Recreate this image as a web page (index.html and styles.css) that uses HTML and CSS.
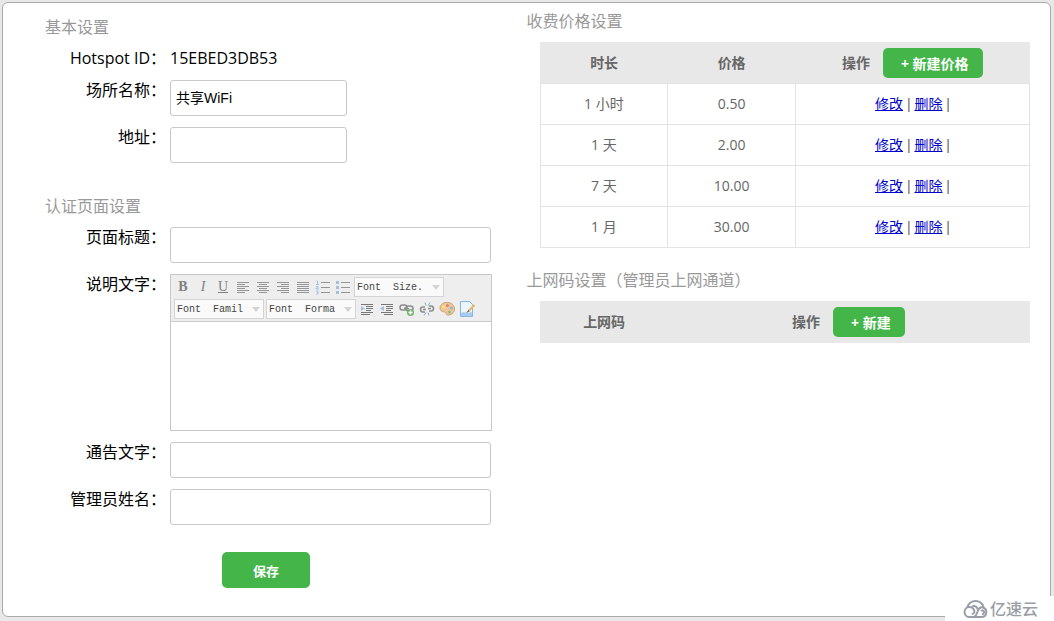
FILE: index.html
```html
<!DOCTYPE html>
<html lang="zh-CN">
<head>
<meta charset="utf-8">
<meta name="viewport" content="width=device-width, initial-scale=1">
<title>热点设置</title>
<link rel="stylesheet" href="styles.css">
</head>
<body>
<main class="panel">
  <form class="settings">
    <h2 class="title">基本设置</h2>
    <div class="fields">
      <span class="label">Hotspot ID：</span>
      <span class="value">15EBED3DB53</span>
      <label class="label" for="place">场所名称：</label>
      <input class="input input-short" id="place" type="text" value="共享WiFi">
      <label class="label" for="address">地址：</label>
      <input class="input input-short" id="address" type="text">
    </div>
    <h2 class="title title-next">认证页面设置</h2>
    <div class="fields">
      <label class="label" for="page-title">页面标题：</label>
      <input class="input" id="page-title" type="text">
      <label class="label" for="description">说明文字：</label>
      <div class="editor">
        <div class="toolbar">
          <div class="tools">
            <button class="tool tool-bold" type="button" aria-label="Bold">B</button>
            <button class="tool tool-italic" type="button" aria-label="Italic">I</button>
            <button class="tool tool-underline" type="button" aria-label="Underline">U</button>
            <button class="tool" type="button" aria-label="Align left"><svg class="icon" viewBox="0 0 16 16"><path class="line" d="M2 3.5h12M2 5.5h8M2 7.5h12M2 9.5h8M2 11.5h12M2 13.5h8"/></svg></button>
            <button class="tool" type="button" aria-label="Align center"><svg class="icon" viewBox="0 0 16 16"><path class="line" d="M2 3.5h12M4 5.5h8M2 7.5h12M4 9.5h8M2 11.5h12M4 13.5h8"/></svg></button>
            <button class="tool" type="button" aria-label="Align right"><svg class="icon" viewBox="0 0 16 16"><path class="line" d="M2 3.5h12M6 5.5h8M2 7.5h12M6 9.5h8M2 11.5h12M6 13.5h8"/></svg></button>
            <button class="tool" type="button" aria-label="Justify"><svg class="icon" viewBox="0 0 16 16"><path class="line" d="M2 3.5h12M2 5.5h12M2 7.5h12M2 9.5h12M2 11.5h12M2 13.5h12"/></svg></button>
            <button class="tool" type="button" aria-label="Numbered list"><svg class="icon" viewBox="0 0 16 16"><path class="line" d="M6 3.5h9M6 8.5h9M6 13.5h9"/><path class="blue" d="M1.5 2h1v3M1 5.500h3M1 7.500h2v1.500h-2v1h3M1 12h2v3h-2M2 13.500h1"/></svg></button>
            <button class="tool" type="button" aria-label="Bulleted list"><svg class="icon" viewBox="0 0 16 16"><path class="line" d="M6 3.5h9M6 8.5h9M6 13.5h9"/><path class="dot" d="M1 2h3v3H1zM1 7h3v3H1zM1 12h3v3H1z"/></svg></button>
            <span class="pick"><select class="pick-box" aria-label="Font size"><option>Font&nbsp; Size.</option></select></span>
          </div>
          <div class="tools">
            <span class="pick"><select class="pick-box" aria-label="Font family"><option>Font&nbsp; Famil</option></select></span>
            <span class="pick"><select class="pick-box" aria-label="Font format"><option>Font&nbsp; Forma</option></select></span>
            <button class="tool" type="button" aria-label="Indent"><svg class="icon" viewBox="0 0 16 16"><path class="line line-dark" d="M2 3.500h12M7 5.500h7M7 7.500h7M7 9.500h5M2 11.500h12M2 13.500h9"/><path class="dot" d="M2 5l4 2.500-4 2.500z"/></svg></button>
            <button class="tool" type="button" aria-label="Outdent"><svg class="icon" viewBox="0 0 16 16"><path class="line line-dark" d="M2 3.500h12M7 5.500h7M7 7.500h7M7 9.500h5M2 11.500h12M5 13.500h9"/><path class="dot" d="M5 5L1 7.500 5 10z"/></svg></button>
            <button class="tool" type="button" aria-label="Add link"><svg class="icon" viewBox="0 0 16 16"><g class="chain"><rect x="1" y="4" width="7" height="5" rx="2.500"/><rect x="7" y="5" width="7" height="5" rx="2.500"/><path d="M5 7l5 1"/></g><circle cx="11.500" cy="11.500" r="3.500" fill="#74b46c"/><path d="M9.500 11.500h4M11.500 9.500v4" stroke="#fff" stroke-width="1.400"/></svg></button>
            <button class="tool" type="button" aria-label="Remove link"><svg class="icon" viewBox="0 0 16 16"><g class="chain"><path d="M6 6H4a2.500 2.500 0 0 0 0 5h2M10 5h2a2.500 2.500 0 0 1 0 5h-2M4 8.500h3M9 7.500h3"/></g><path d="M6 1.500l1 3M11 1.500l-2 3M5 14.500l2-3M10 14.500l-1-3" stroke="#8cacd4" fill="none"/></svg></button>
            <button class="tool" type="button" aria-label="Text color"><svg class="icon" viewBox="0 0 16 16"><path d="M1 7C1 3 5 1 9 1.500c4 .4 6.500 3 6.500 6.500 0 4-4 6.500-7 6-2-.4-1-2.500-2.500-3C4 10.500 1 10.500 1 7z" fill="#edc79c" stroke="#d1a071"/><circle cx="4.500" cy="6" r="1.500" fill="#f7e36d"/><circle cx="8.500" cy="4.500" r="1.500" fill="#dd8373"/><circle cx="12.300" cy="7" r="1.500" fill="#8bb1d9"/><circle cx="10.500" cy="11" r="1.500" fill="#8fc080"/></svg></button>
            <button class="tool" type="button" aria-label="Edit HTML"><svg class="icon" viewBox="0 0 16 16"><path d="M1.500 .5h9l3 3v12h-12z" fill="#eef6fd" stroke="#86b6e4"/><path d="M2 12c3-2 6 1 11-1v4H2z" fill="#a5cbee"/><path d="M15.500 4l-6 6" stroke="#e5b868" stroke-width="2.200"/><path d="M9.500 9L7 12l3.500-1.500z" fill="#666"/></svg></button>
          </div>
        </div>
        <textarea class="editor-text" id="description"></textarea>
      </div>
      <label class="label" for="notice">通告文字：</label>
      <input class="input" id="notice" type="text">
      <label class="label" for="admin">管理员姓名：</label>
      <input class="input" id="admin" type="text">
    </div>
    <button class="button button-save" type="button">保存</button>
  </form>

  <section class="pricing">
    <h2 class="title">收费价格设置</h2>
    <table class="table">
      <colgroup><col class="col-narrow"><col class="col-narrow"><col></colgroup>
      <thead>
        <tr><th>时长</th><th>价格</th><th><span class="action">操作<button class="button button-new" type="button">+ 新建价格</button></span></th></tr>
      </thead>
      <tbody>
        <tr><td>1 小时</td><td>0.50</td><td class="links"><a href="#">修改</a> | <a href="#">删除</a> |</td></tr>
        <tr><td>1 天</td><td>2.00</td><td class="links"><a href="#">修改</a> | <a href="#">删除</a> |</td></tr>
        <tr><td>7 天</td><td>10.00</td><td class="links"><a href="#">修改</a> | <a href="#">删除</a> |</td></tr>
        <tr><td>1 月</td><td>30.00</td><td class="links"><a href="#">修改</a> | <a href="#">删除</a> |</td></tr>
      </tbody>
    </table>
    <h2 class="title title-codes">上网码设置（管理员上网通道）</h2>
    <table class="table">
      <colgroup><col class="col-narrow"><col></colgroup>
      <thead>
        <tr><th>上网码</th><th><span class="action">操作<button class="button button-new" type="button">+ 新建</button></span></th></tr>
      </thead>
    </table>
  </section>
</main>
<div class="brand">
  <svg class="brand-logo" viewBox="0 0 26 20"><path d="M4.500 8C5 4.500 8.500 2 12.500 2s7.500 2.500 8 6M19 18H6.500a5 5 0 1 1 4.800-6.500c.6 2-.8 3.500-2.500 3.500M9 7.500c3-1.200 5.500.3 5.500 3M11 18c2.500-1 3-4 4-6.500 1-2.500 3-3.500 5-3a4.900 4.900 0 0 1-1 9.500M19 15a1.800 1.800 0 1 0-1-3"/></svg>
  <span>亿速云</span>
</div>
</body>
</html>
```
FILE: styles.css
```css
* {
  box-sizing: border-box;
}

body {
  display: flex;
  min-height: 100vh;
  margin: 0;
  padding: 2px 3px 4px 2px;
  background: #e8e8e8;
  color: #000;
  font: 16px/22px "Open Sans", "Noto Sans CJK SC", sans-serif;
}

input,
select,
textarea,
button {
  margin: 0;
  font-family: inherit;
}

.panel {
  display: grid;
  flex: 1;
  grid-template-columns: minmax(490px, 50fr) minmax(400px, 50fr);
  border: 1px solid #aaa;
  border-radius: 6px;
  background: #fff;
}

.settings {
  padding: 13px 0 28px;
}

.pricing {
  padding: 7px 20px 28px 0;
}

.title {
  margin: 0 0 10px;
  color: #999;
  font-size: 16px;
  font-weight: 400;
}

.settings .title {
  padding-left: 42px;
}

.settings .title-next {
  margin-top: 32px;
}

.title-codes {
  margin-top: 21px;
}

.fields {
  display: grid;
  grid-template-columns: 163px minmax(0, 322px);
  gap: 11px 4px;
}

.label,
.value {
  line-height: 21px;
}

.label {
  text-align: right;
}

.input {
  width: 321px;
  max-width: 100%;
  height: 36px;
  padding: 0 5px 2px;
  border: 1px solid #c8c8c8;
  border-radius: 3px;
  background: #fff;
  font-family: "Liberation Sans", "Noto Sans CJK SC", sans-serif;
  font-size: 14px;
}

.input-short {
  width: 177px;
}

.editor {
  border: 1px solid #c8c8c8;
}

.toolbar {
  padding: 1px 2px;
  border-bottom: 1px solid #ccc;
  background: #eee;
}

.tools {
  display: flex;
  align-items: center;
  height: 22px;
}

.tool {
  display: flex;
  align-items: center;
  justify-content: center;
  width: 20px;
  height: 20px;
  padding: 0;
  border: 0;
  background: none;
  color: #808080;
  font-family: "Liberation Serif", serif;
  font-size: 14px;
}

.tool-bold {
  font-weight: 700;
}

.tool-italic {
  font-style: italic;
}

.tool-underline {
  text-decoration: underline;
}

.icon {
  width: 16px;
  height: 16px;
}

.line {
  fill: none;
  stroke: #959595;
}

.line-dark {
  stroke: #777;
}

.blue {
  fill: none;
  stroke: #a3c4ec;
}

.dot {
  fill: #a3c0e2;
}

.chain {
  fill: none;
  stroke: #8c8c8c;
  stroke-width: 1.5;
}

.pick {
  position: relative;
  width: 90px;
  height: 20px;
  margin: 0 1px;
}

.pick::after {
  content: "";
  position: absolute;
  top: 8px;
  right: 4px;
  border: 4px solid transparent;
  border-top: 5px solid #d4d4d4;
  border-bottom: 0;
  pointer-events: none;
}

.pick-box {
  display: block;
  appearance: none;
  width: 100%;
  height: 100%;
  padding: 0 0 0 2px;
  border: 1px solid #d4d4d4;
  border-radius: 0;
  background: #fafafa;
  color: #444;
  font-family: "Liberation Mono", monospace;
  font-size: 10px;
}

.editor-text {
  display: block;
  width: 100%;
  height: 108px;
  padding: 4px;
  border: 0;
  resize: none;
  font-size: 14px;
}

.button {
  border: 0;
  border-radius: 5px;
  background: #44b549;
  color: #fff;
  font-size: 13px;
  font-weight: 700;
}

.button-save {
  display: block;
  width: 88px;
  height: 36px;
  margin: 27px 0 0 219px;
}

.button-new {
  height: 30px;
  padding: 0 14px 0 18px;
  font-size: 14px;
}

.table {
  width: calc(100% - 13px);
  margin-left: 13px;
  border-collapse: collapse;
  table-layout: fixed;
  color: #666;
  font-size: 14px;
  text-align: center;
}

.col-narrow {
  width: 26.1%;
}

.table th {
  height: 41px;
  padding: 0;
  background: #e8e8e8;
}

.table thead {
  border: 1px solid #e8e8e8;
}

.table td {
  height: 41px;
  padding: 0;
  border: 1px solid #e3e3e3;
}

.table .links {
  font-family: "Liberation Sans", "Noto Sans CJK SC", sans-serif;
}

.table a {
  color: #00c;
}

.action {
  display: flex;
  align-items: center;
  justify-content: center;
  gap: 13px;
}

.brand {
  position: absolute;
  right: 0;
  bottom: 0;
  display: flex;
  align-items: center;
  gap: 1px;
  width: 109px;
  height: 25px;
  padding-left: 18px;
  background: #fff;
  color: #999da5;
  font-weight: 500;
}

.brand-logo {
  width: 26px;
  height: 20px;
  fill: none;
  stroke: #999da5;
  stroke-width: 2;
}
```
